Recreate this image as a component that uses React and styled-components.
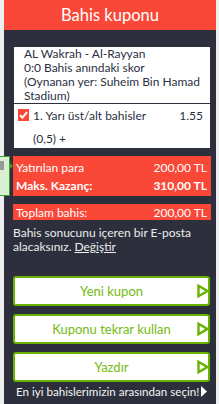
import React from "react";
import styled, { createGlobalStyle } from "styled-components";

const Global = createGlobalStyle`
  html, body { margin: 0; padding: 0; background: #efefef; }
  body { font-family: "Lato", "Noto Sans", sans-serif; }
  * { box-sizing: border-box; }
`;

const Page = styled.div`
  position: relative;
  padding-left: 4px;
  width: 216px;
`;

const Panel = styled.div`
  background: #2d303c;
  padding-bottom: 9px;
`;

const Header = styled.div`
  height: 30px;
  background: #f94837;
  color: #fff;
  font-size: 16.5px;
  display: flex;
  align-items: center;
  justify-content: center;
`;

const Content = styled.div`
  padding: 17px 5px 0 9px;
  display: flex;
  flex-direction: column;
`;

const Card = styled.div`
  background: #fff;
  margin: 0 1px;
  color: #2b2f44;
  font-size: 12px;
`;

const MatchInfo = styled.div`
  padding: 0 6px 0 10px;
  line-height: 14px;
  border-bottom: 1px solid #2d303c;
`;

const BetBlock = styled.div`
  padding: 4px 7px 3px 4px;
`;

const BetRow = styled.div`
  display: flex;
  align-items: center;
  height: 14px;
  margin-top: ${(p) => p.$top || 0}px;
`;

const Check = styled.span`
  width: 11px;
  height: 12px;
  background: #f94837;
  display: inline-flex;
  align-items: center;
  justify-content: center;
  margin-right: 4px;
  flex: none;
`;

const BetName = styled.span`
  flex: 1;
  padding-left: ${(p) => (p.$indent ? 15 : 0)}px;
`;

const Odds = styled.span``;

const RedBox = styled.div`
  background: #f94837;
  color: #fff;
  font-size: 12px;
  padding: ${(p) => (p.$compact ? "0 4px 0 3px" : "2px 4px 2px 3px")};
  margin-top: 8px;
`;

const SumRow = styled.div`
  display: flex;
  justify-content: space-between;
  align-items: center;
  height: ${(p) => p.$h || 18}px;
  font-weight: ${(p) => (p.$bold ? 700 : 400)};
`;

const Note = styled.div`
  color: #ececec;
  font-size: 12px;
  line-height: 14px;
  margin-top: 6px;
`;

const NoteLine = styled.div`
  display: flex;
  gap: 3px;
  white-space: nowrap;
`;

const Link = styled.span`
  text-decoration: underline;
`;

const Buttons = styled.div`
  margin-top: 22px;
  display: flex;
  flex-direction: column;
  gap: 8px;
  padding-right: 1px;
`;

const Button = styled.div`
  height: 30px;
  background: #fff;
  border: 2px solid #68b300;
  border-radius: 3px;
  color: #74bb0f;
  font-size: 13px;
  display: grid;
  grid-template-columns: 1fr auto 1fr;
  align-items: center;
`;

const ButtonIcon = styled.svg`
  justify-self: end;
  margin-right: -1px;
`;

const Footer = styled.div`
  margin-top: 2px;
  display: flex;
  align-items: center;
  justify-content: space-between;
  color: #f4f4f4;
  font-size: 11.6px;
  white-space: nowrap;
  padding: 0 4px 0 3px;
  height: 14px;
`;

const SideTab = styled.div`
  position: absolute;
  left: 0;
  top: 156px;
  width: 10px;
  height: 40px;
  background: #d9efd2;
  border: 1px solid #3aa02c;
  border-left: none;
`;

const SideArrow = styled.div`
  position: absolute;
  left: 9px;
  top: 5px;
  width: 0;
  height: 0;
  border-top: 4px solid transparent;
  border-bottom: 4px solid transparent;
  border-left: 4px solid #3aa02c;
`;

const SideIcon = styled.div`
  position: absolute;
  left: 0;
  top: 4px;
  width: 4px;
  height: 9px;
  background: #9a9a9a;
`;

const Tri = () => (
  <ButtonIcon width="12" height="14" viewBox="0 0 12 14">
    <path d="M1.5 1.8 L10.3 7 L1.5 12.2 Z" fill="none" stroke="#68b300" strokeWidth="2.4" strokeLinejoin="miter" />
  </ButtonIcon>
);

export default function App() {
  return (
    <Page>
      <Global />
      <Panel>
        <Header>Bahis kuponu</Header>
        <Content>
          <Card>
            <MatchInfo>
              AL Wakrah - Al-Rayyan
              <br />
              0:0 Bahis anındaki skor
              <br />
              (Oynanan yer: Suheim Bin Hamad Stadium)
            </MatchInfo>
            <BetBlock>
              <BetRow>
                <Check>
                  <svg width="9" height="8" viewBox="0 0 9 8">
                    <path d="M1 4.2 L3.5 6.6 L8 1.2" fill="none" stroke="#fff" strokeWidth="2" />
                  </svg>
                </Check>
                <BetName>1. Yarı üst/alt bahisler</BetName>
                <Odds>1.55</Odds>
              </BetRow>
              <BetRow $top={9}>
                <BetName $indent>(0,5) +</BetName>
              </BetRow>
            </BetBlock>
          </Card>
          <RedBox>
            <SumRow>
              <span>Yatırılan para</span>
              <span>200,00 TL</span>
            </SumRow>
            <SumRow $bold>
              <span>Maks. Kazanç:</span>
              <span>310,00 TL</span>
            </SumRow>
          </RedBox>
          <RedBox $compact>
            <SumRow $h={16}>
              <span>Toplam bahis:</span>
              <span>200,00 TL</span>
            </SumRow>
          </RedBox>
          <Note>
            <NoteLine>
              <span>Bahis sonucunu içeren bir E-posta</span>
            </NoteLine>
            <NoteLine>
              <span>alacaksınız.</span>
              <Link>Değiştir</Link>
            </NoteLine>
          </Note>
          <Buttons>
            {["Yeni kupon", "Kuponu tekrar kullan", "Yazdır"].map((t) => (
              <Button key={t}>
                <span />
                <span>{t}</span>
                <Tri />
              </Button>
            ))}
          </Buttons>
          <Footer>
            <span>En iyi bahislerimizin arasından seçin!</span>
            <svg width="6" height="11" viewBox="0 0 6 11">
              <path d="M0 0 L6 5.5 L0 11 Z" fill="#fff" />
            </svg>
          </Footer>
        </Content>
      </Panel>
      <SideTab>
        <SideIcon />
        <SideArrow />
      </SideTab>
    </Page>
  );
}
